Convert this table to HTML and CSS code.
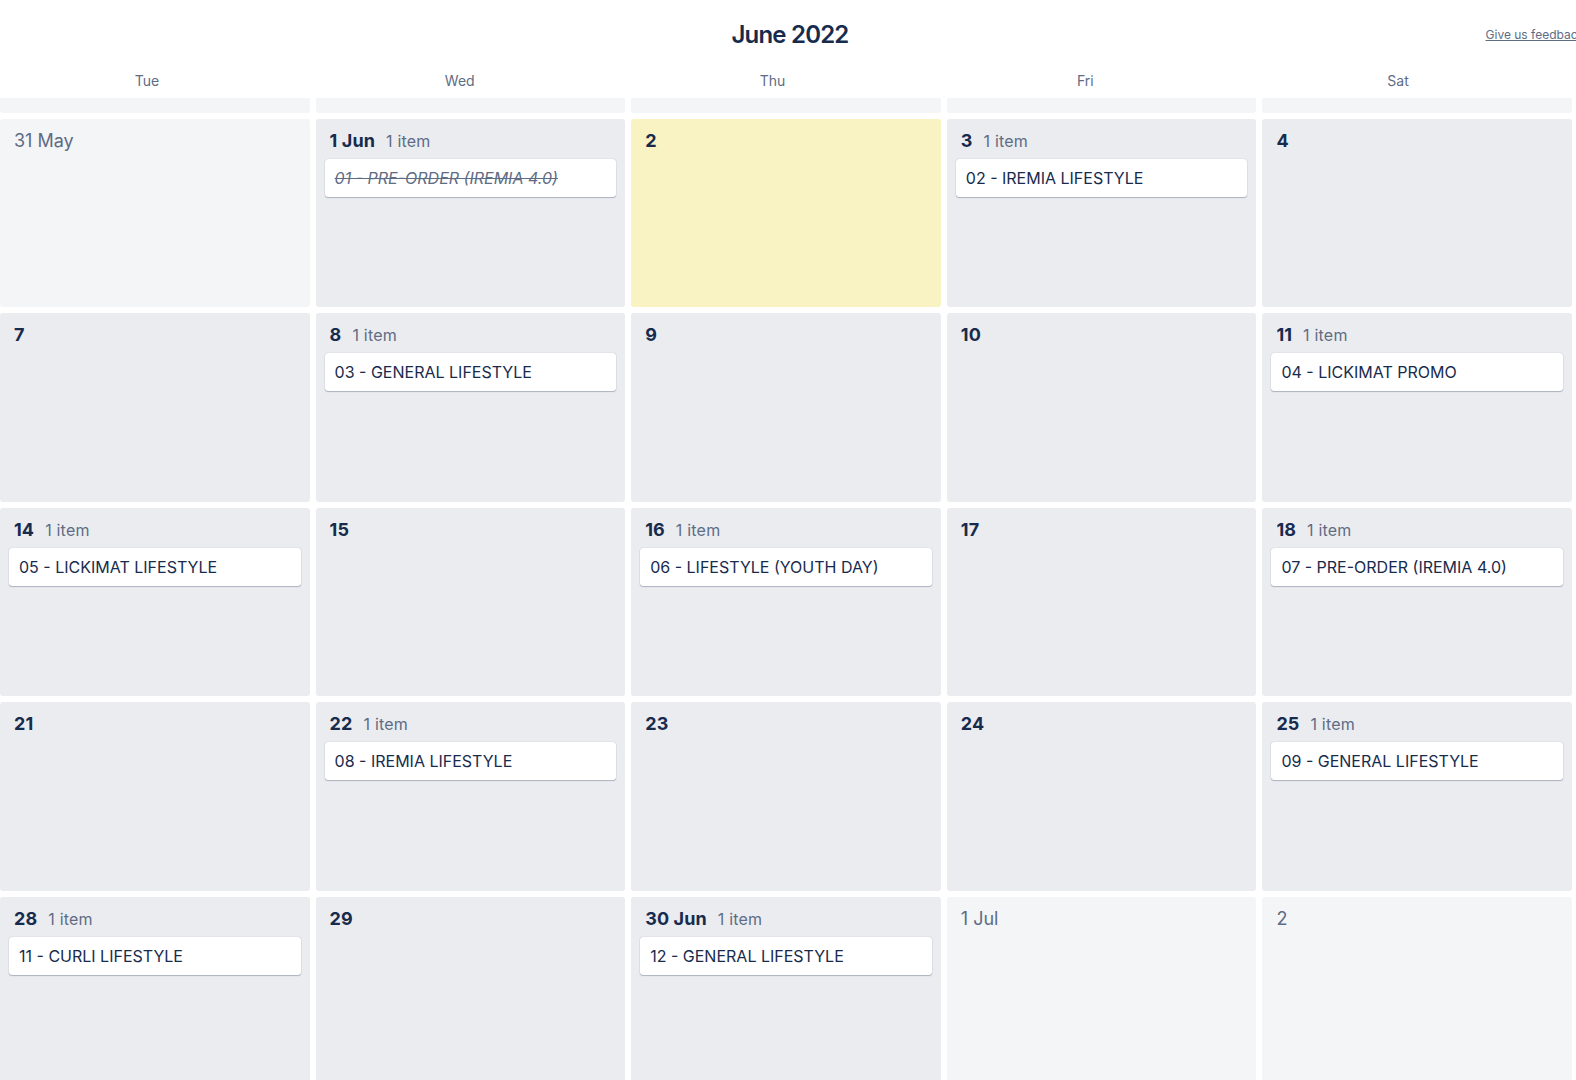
FILE: index.html
```html
<!DOCTYPE html>
<html lang="en">
<head>
<meta charset="utf-8">
<title>June 2022</title>
<link rel="stylesheet" href="styles.css">
</head>
<body>
<div class="page">
  <header class="top">
    <div class="title-row">
      <div class="spacer"></div>
      <h1 class="month">June 2022</h1>
      <div class="actions"><a class="feedback" href="#">Give us feedback</a></div>
    </div>
    <div class="weekdays">
      <div class="wd">Tue</div>
      <div class="wd">Wed</div>
      <div class="wd">Thu</div>
      <div class="wd">Fri</div>
      <div class="wd">Sat</div>
    </div>
  </header>
  <main class="grid">
    <div class="cell other strip"></div>
    <div class="cell other strip"></div>
    <div class="cell other strip"></div>
    <div class="cell other strip"></div>
    <div class="cell other strip"></div>

    <div class="cell other"><div class="day"><span class="num">31 May</span></div></div>
    <div class="cell"><div class="day"><span class="num">1 Jun</span><span class="count">1 item</span></div><div class="card done">01 - PRE-ORDER (IREMIA 4.0)</div></div>
    <div class="cell today"><div class="day"><span class="num">2</span></div></div>
    <div class="cell"><div class="day"><span class="num">3</span><span class="count">1 item</span></div><div class="card">02 - IREMIA LIFESTYLE</div></div>
    <div class="cell"><div class="day"><span class="num">4</span></div></div>

    <div class="cell"><div class="day"><span class="num">7</span></div></div>
    <div class="cell"><div class="day"><span class="num">8</span><span class="count">1 item</span></div><div class="card">03 - GENERAL LIFESTYLE</div></div>
    <div class="cell"><div class="day"><span class="num">9</span></div></div>
    <div class="cell"><div class="day"><span class="num">10</span></div></div>
    <div class="cell"><div class="day"><span class="num">11</span><span class="count">1 item</span></div><div class="card">04 - LICKIMAT PROMO</div></div>

    <div class="cell"><div class="day"><span class="num">14</span><span class="count">1 item</span></div><div class="card">05 - LICKIMAT LIFESTYLE</div></div>
    <div class="cell"><div class="day"><span class="num">15</span></div></div>
    <div class="cell"><div class="day"><span class="num">16</span><span class="count">1 item</span></div><div class="card">06 - LIFESTYLE (YOUTH DAY)</div></div>
    <div class="cell"><div class="day"><span class="num">17</span></div></div>
    <div class="cell"><div class="day"><span class="num">18</span><span class="count">1 item</span></div><div class="card">07 - PRE-ORDER (IREMIA 4.0)</div></div>

    <div class="cell"><div class="day"><span class="num">21</span></div></div>
    <div class="cell"><div class="day"><span class="num">22</span><span class="count">1 item</span></div><div class="card">08 - IREMIA LIFESTYLE</div></div>
    <div class="cell"><div class="day"><span class="num">23</span></div></div>
    <div class="cell"><div class="day"><span class="num">24</span></div></div>
    <div class="cell"><div class="day"><span class="num">25</span><span class="count">1 item</span></div><div class="card">09 - GENERAL LIFESTYLE</div></div>

    <div class="cell"><div class="day"><span class="num">28</span><span class="count">1 item</span></div><div class="card">11 - CURLI LIFESTYLE</div></div>
    <div class="cell"><div class="day"><span class="num">29</span></div></div>
    <div class="cell"><div class="day"><span class="num">30 Jun</span><span class="count">1 item</span></div><div class="card">12 - GENERAL LIFESTYLE</div></div>
    <div class="cell other"><div class="day"><span class="num">1 Jul</span></div></div>
    <div class="cell other"><div class="day"><span class="num">2</span></div></div>
  </main>
</div>
</body>
</html>
```
FILE: styles.css
```css
html, body {
  margin: 0;
  padding: 0;
  height: 100%;
  overflow: hidden;
  background: #ffffff;
}
body {
  font-family: Inter, "Noto Sans", "Liberation Sans", sans-serif;
  color: #172B4D;
}
.page {
  width: 1576px;
}
.top {
  height: 97.7px;
  display: flex;
  flex-direction: column;
}
.title-row {
  display: grid;
  grid-template-columns: 1fr auto 1fr;
  padding-top: 21px;
  padding-left: 4px;
}
.month {
  margin: 0;
  font-size: 24px;
  line-height: 28px;
  font-weight: 600;
  letter-spacing: -0.8px;
  color: #172B4D;
}
.actions {
  min-width: 0;
  white-space: nowrap;
  padding-left: 637px;
  padding-top: 2px;
}
.feedback {
  font-size: 12px;
  line-height: 16px;
  color: #5E6C84;
  text-decoration: underline;
}
.weekdays {
  display: grid;
  grid-template-columns: repeat(5, 294px);
  column-gap: 18.75px;
  margin-top: 22px;
}
.wd {
  text-align: center;
  font-size: 14px;
  line-height: 20px;
  color: #5E6C84;
}
.grid {
  display: grid;
  grid-template-columns: repeat(5, 309.6px);
  grid-template-rows: 15px repeat(5, 188.6px);
  column-gap: 6px;
  row-gap: 6px;
}
.cell {
  background: #EBECF0;
  border-radius: 3px;
  padding: 10px 9px 0 9px;
  box-sizing: border-box;
  overflow: hidden;
}
.cell.other {
  background: #F4F5F7;
}
.cell.strip {
  padding: 0;
  border-radius: 0 0 3px 3px;
}
.cell.today {
  background: #F9F2C2;
}
.day {
  display: flex;
  align-items: baseline;
  padding-left: 5px;
  height: 24px;
  margin-bottom: 6px;
}
.num {
  font-size: 18px;
  line-height: 24px;
  font-weight: 700;
  letter-spacing: 0.1px;
  color: #172B4D;
}
.other .num {
  font-weight: 400;
  letter-spacing: 0;
  color: #5E6C84;
}
.count {
  margin-left: 11px;
  font-size: 16px;
  line-height: 24px;
  letter-spacing: 0.2px;
  color: #5E6C84;
}
.card {
  background: #ffffff;
  border-radius: 3px;
  box-shadow: 0 1px 1px rgba(9, 30, 66, 0.25), 0 0 1px rgba(9, 30, 66, 0.31);
  padding: 9px 10px;
  font-size: 16px;
  line-height: 20px;
  color: #172B4D;
  white-space: nowrap;
  overflow: hidden;
}
.card.done {
  font-style: italic;
  text-decoration: line-through;
  color: #5E6C84;
}
```
